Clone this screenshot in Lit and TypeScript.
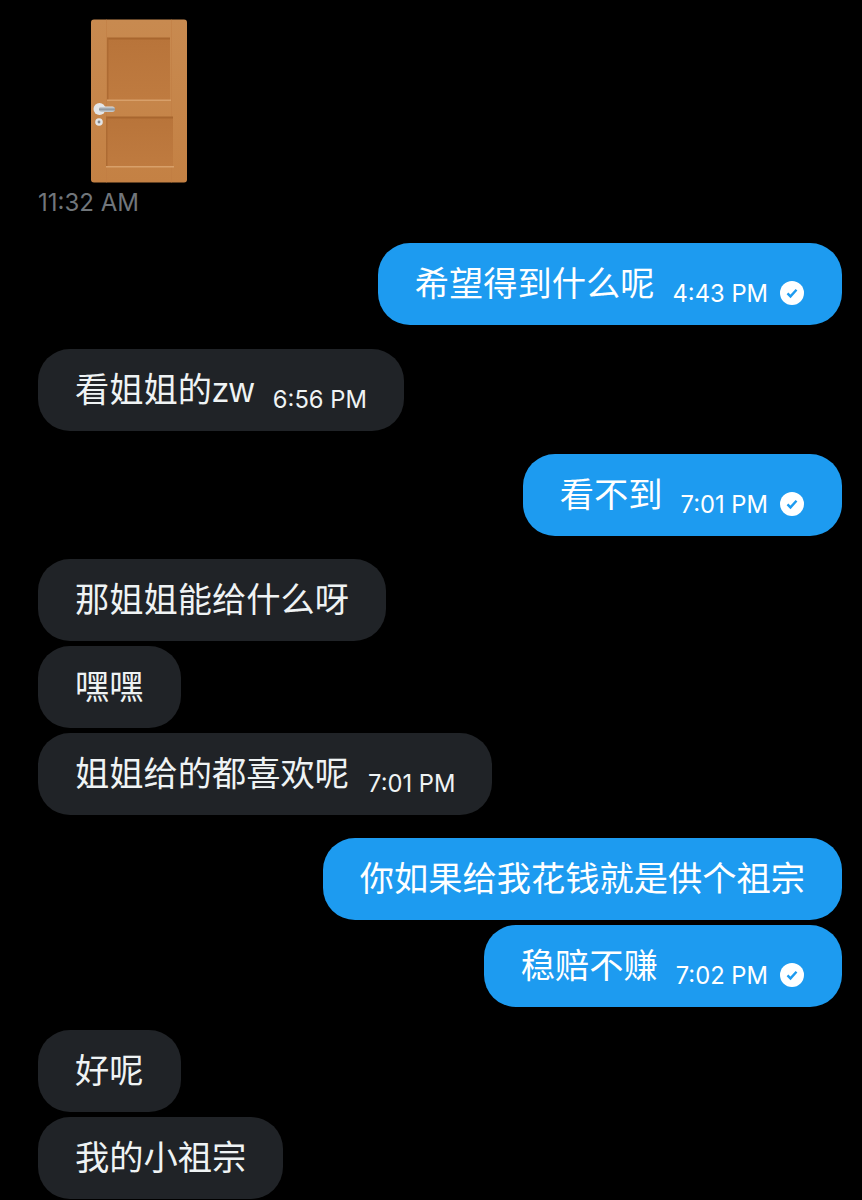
import { LitElement, css, html, nothing } from 'lit';
import { customElement } from 'lit/decorators.js';

type Msg = { text: string; mine?: boolean; time?: string; gap?: number };

const messages: Msg[] = [
  { text: '希望得到什么呢', mine: true, time: '4:43 PM', gap: 26 },
  { text: '看姐姐的zw', time: '6:56 PM', gap: 24 },
  { text: '看不到', mine: true, time: '7:01 PM', gap: 23 },
  { text: '那姐姐能给什么呀', gap: 23 },
  { text: '嘿嘿' },
  { text: '姐姐给的都喜欢呢', time: '7:01 PM' },
  { text: '你如果给我花钱就是供个祖宗', mine: true, gap: 23 },
  { text: '稳赔不赚', mine: true, time: '7:02 PM' },
  { text: '好呢', gap: 23 },
  { text: '我的小祖宗' },
];

const door = html`<svg class="door" width="98" height="164" viewBox="0 0 98 164">
  <defs>
    <linearGradient id="wood" x1="0" y1="0" x2="0" y2="1">
      <stop offset="0" stop-color="#c88a50"></stop>
      <stop offset="1" stop-color="#c48144"></stop>
    </linearGradient>
    <linearGradient id="panel" x1="0" y1="0" x2="0" y2="1">
      <stop offset="0" stop-color="#b8743a"></stop>
      <stop offset="1" stop-color="#bf7b40"></stop>
    </linearGradient>
    <linearGradient id="lever" x1="0" y1="0" x2="0" y2="1">
      <stop offset="0" stop-color="#dfe2e5"></stop>
      <stop offset="0.5" stop-color="#8d959c"></stop>
      <stop offset="1" stop-color="#cfd3d6"></stop>
    </linearGradient>
  </defs>
  <rect x="1" y="0.5" width="96" height="163" rx="3" fill="url(#wood)"></rect>
  <rect x="16" y="0.5" width="1" height="163" fill="#c07c42" opacity="0.5"></rect>
  <rect x="81" y="0.5" width="1" height="163" fill="#c07c42" opacity="0.5"></rect>
  <rect x="17" y="19" width="63" height="62" fill="url(#panel)"></rect>
  <rect x="17" y="18.5" width="63" height="2" fill="#a8662f"></rect>
  <rect x="17" y="19" width="1.5" height="62" fill="#ad6b33"></rect>
  <rect x="17" y="80.5" width="64" height="1.5" fill="#d8a06a"></rect>
  <rect x="16" y="98" width="67" height="50" fill="url(#panel)"></rect>
  <rect x="16" y="97.5" width="67" height="2" fill="#a8662f"></rect>
  <rect x="16" y="98" width="1.5" height="50" fill="#ad6b33"></rect>
  <rect x="16" y="147" width="68" height="1.5" fill="#d8a06a"></rect>
  <circle cx="9.5" cy="90" r="6" fill="#e4e6e8"></circle>
  <rect x="9" y="87.5" width="16" height="5.5" rx="2.7" fill="url(#lever)"></rect>
  <circle cx="9" cy="103" r="3.8" fill="#e3e5e7"></circle>
  <circle cx="9" cy="103" r="1.4" fill="#84888c"></circle>
</svg>`;

const check = html`<svg class="check" width="24" height="24" viewBox="0 0 24 24">
  <circle cx="12" cy="12" r="12" fill="#fff"></circle>
  <path d="M7.5 12.4l3 3 6-6.6" fill="none" stroke="#1d9bf0" stroke-width="2.4"></path>
</svg>`;

@customElement('app-root')
export class AppRoot extends LitElement {
  static styles = css`
    :host {
      display: block;
      width: 862px;
      height: 1200px;
      overflow: hidden;
      background: #000;
      font-family: Inter, 'Noto Sans CJK SC', sans-serif;
    }
    .thread {
      display: flex;
      flex-direction: column;
      padding: 19px 20px 0 38px;
    }
    .door {
      display: block;
      margin-left: 52px;
      filter: blur(0.5px);
    }
    .stamp {
      margin-top: 5px;
      margin-bottom: -1px;
      font-size: 24px;
      line-height: 30px;
      color: #71767b;
    }
    .row {
      display: flex;
      justify-content: flex-start;
      margin-top: 5px;
    }
    .row.mine {
      justify-content: flex-end;
    }
    .bubble {
      box-sizing: border-box;
      display: flex;
      align-items: center;
      height: 82px;
      padding: 0 37px;
      border-radius: 32px;
      background: #202327;
      color: #eff3f4;
    }
    .text {
      font-family: 'Liberation Sans', 'Noto Sans CJK SC', sans-serif;
      font-size: 34.25px;
      line-height: 44px;
      white-space: nowrap;
    }
    .mine .bubble {
      background: #1d9bf0;
      color: #fff;
    }
    .time {
      margin-left: 19px;
      margin-top: 20px;
      font-size: 23.75px;
      line-height: 30px;
      white-space: nowrap;
    }
    .mine .time {
      margin-left: 18px;
    }
    .check {
      flex: none;
      margin: 18px 1px 0 12px;
    }
  `;

  render() {
    return html`<div class="thread">
      ${door}
      <div class="stamp">11:32 AM</div>
      ${messages.map(
        (m) => html`<div class="row ${m.mine ? 'mine' : ''}" style=${m.gap ? `margin-top:${m.gap}px` : nothing}>
          <div class="bubble">
            <span class="text">${m.text}</span>
            ${m.time ? html`<span class="time">${m.time}</span>` : nothing}
            ${m.time && m.mine ? check : nothing}
          </div>
        </div>`,
      )}
    </div>`;
  }
}
